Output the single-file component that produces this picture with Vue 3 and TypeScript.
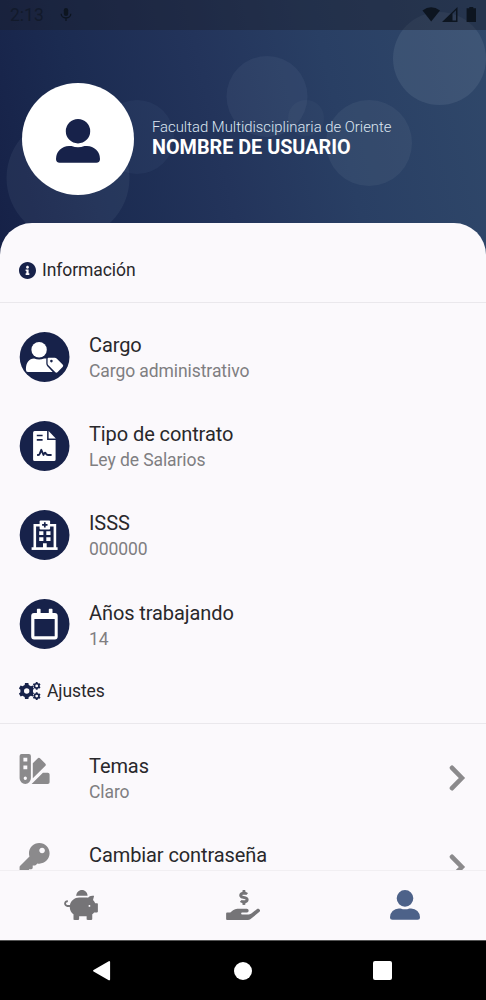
<script setup lang="ts">
interface InfoItem {
  icon: 'role' | 'contract' | 'hospital' | 'calendar'
  title: string
  value: string
}

const info: InfoItem[] = [
  { icon: 'role', title: 'Cargo', value: 'Cargo administrativo' },
  { icon: 'contract', title: 'Tipo de contrato', value: 'Ley de Salarios' },
  { icon: 'hospital', title: 'ISSS', value: '000000' },
  { icon: 'calendar', title: 'Años trabajando', value: '14' },
]

// Outline of a cog wheel with a round hole in its middle
function gear(cx: number, cy: number, r: number, teeth: number, hole: number): string {
  const step = (Math.PI * 2) / teeth
  const inner = r * 0.78
  const points: string[] = []
  for (let i = 0; i < teeth; i++) {
    const a = i * step - Math.PI / 2
    const corners: [number, number][] = [[-0.31, inner], [-0.2, r], [0.2, r], [0.31, inner]]
    for (const [offset, radius] of corners) {
      const t = a + offset * step
      points.push(`${(cx + radius * Math.cos(t)).toFixed(2)} ${(cy + radius * Math.sin(t)).toFixed(2)}`)
    }
  }
  return `M${points.join('L')}ZM${cx - hole} ${cy}a${hole} ${hole} 0 1 0 ${hole * 2} 0a${hole} ${hole} 0 1 0 ${-hole * 2} 0Z`
}

const gears = gear(7.7, 9, 8.2, 6, 2.7) + gear(17.7, 3.9, 4, 6, 1.4) + gear(17.7, 14.1, 4, 6, 1.4)
const person =
  'M22 0a12.2 12.2 0 1 1 0 24.4A12.2 12.2 0 0 1 22 0ZM13 27h2.5q6.5 2.5 13 0H31a13 13 0 0 1 13 13a3.7 3.7 0 0 1-3.7 3.7H3.7A3.7 3.7 0 0 1 0 40A13 13 0 0 1 13 27Z'
</script>

<template>
  <div class="screen">
    <header class="hero">
      <svg class="bubbles" width="486" height="260" viewBox="0 0 486 260">
        <circle cx="439.500" cy="58.500" r="46.500" fill="#94a9bd" opacity=".15" />
        <circle cx="267" cy="96.500" r="40.500" fill="#8192b0" opacity=".1" />
        <circle cx="306" cy="118" r="18" fill="#8192b0" opacity=".06" />
        <circle cx="369" cy="143" r="43" fill="#8a9daa" opacity=".11" />
        <circle cx="137" cy="137" r="37" fill="#7591ad" opacity=".08" />
        <circle cx="68" cy="178" r="61.500" fill="#8491ad" opacity=".11" />
      </svg>
      <div class="status">
        <span class="clock">2:13</span>
        <svg class="mic" width="12" height="14" viewBox="0 0 12 14">
          <rect x="3.800" y="0" width="4.400" height="8" rx="2.200" fill="currentColor" />
          <path d="M1.200 5.800a4.800 4.200 0 0 0 9.600 0M6 10v3" fill="none" stroke="currentColor" stroke-width="1.300" />
        </svg>
        <svg class="signals" width="56" height="18" viewBox="0 0 56 18">
          <path d="M1.500 4.500Q10 -1.800 19 4.500L10.200 15.500Z" fill="currentColor" />
          <path fill-rule="evenodd" d="M21 16 36.500 1V16ZM31.500 7.500V14.500H35V4.200Z" fill="currentColor" />
          <path d="M48.300 1h4v1.200h2.700V16h-9.400V2.200h2.700Z" fill="currentColor" />
        </svg>
      </div>
      <div class="profile">
        <div class="avatar">
          <svg width="44" height="44" viewBox="0 0 44 44"><path :d="person" fill="#17224a" /></svg>
        </div>
        <div class="identity">
          <div class="faculty">Facultad Multidisciplinaria de Oriente</div>
          <div class="name">NOMBRE DE USUARIO</div>
        </div>
      </div>
    </header>

    <main class="sheet">
      <h2 class="section first">
        <svg width="17" height="17" viewBox="8 8 496 496">
          <path fill="#17224a" d="M256 8C119.043 8 8 119.083 8 256c0 136.997 111.043 248 248 248s248-111.003 248-248C504 119.083 392.957 8 256 8zm0 110c23.196 0 42 18.804 42 42s-18.804 42-42 42-42-18.804-42-42 18.804-42 42-42zm56 254c0 6.627-5.373 12-12 12h-88c-6.627 0-12-5.373-12-12v-24c0-6.627 5.373-12 12-12h12v-64h-12c-6.627 0-12-5.373-12-12v-24c0-6.627 5.373-12 12-12h64c6.627 0 12 5.373 12 12v100h12c6.627 0 12 5.373 12 12v24z" />
        </svg>
        <span>Información</span>
      </h2>

      <div class="rows">
        <div v-for="item in info" :key="item.icon" class="row">
          <svg class="badge" width="51" height="50" viewBox="-0.600 0 51 50">
            <circle cx="25" cy="25" r="24.900" fill="#17224a" />
            <g v-if="item.icon === 'role'">
              <circle cx="19.500" cy="17.700" r="7.700" fill="#fff" />
              <path d="M6.300 37.500C6.300 30.500 9.500 26.500 14.500 26.500q5 2 10 0h3.300v7.500l5.400 6H8.300q-2 0-2-2.500Z" fill="#fff" />
              <path d="M29 25.700h6.200q1 0 1.800.8l6 6q1.300 1.300 0 2.600l-4.900 4.900q-1.300 1.300-2.600 0l-6.700-6.700q-.8-.8-.8-1.800v-4.800q0-1 1-1Z" fill="#fff" stroke="#17224a" stroke-width="2.600" paint-order="stroke" />
              <circle cx="31.800" cy="29.100" r="1.300" fill="#17224a" />
            </g>
            <g v-else-if="item.icon === 'contract'">
              <path d="M15 10h12.500v9H36v19.500q0 1.500-1.500 1.500H15q-1.500 0-1.500-1.500v-27Q13.500 10 15 10Z" fill="#fff" />
              <path d="M29 10 36.200 17.500H29Z" fill="#fff" />
              <path d="M17.200 14.500H23M17.200 18.800H23" stroke="#17224a" stroke-width="1.700" />
              <path d="M17.500 34h1.200q1 0 1.400-1.200l1.600-4 2.200 5.200q1.200-3.600 2.500-1.200.7 1.200 2 1.200H32" fill="none" stroke="#17224a" stroke-width="1.900" stroke-linejoin="round" />
            </g>
            <g v-else-if="item.icon === 'hospital'">
              <path d="M12 38.600H38" stroke="#fff" stroke-width="2.700" />
              <path d="M15.200 38V15.300H35.300V38" fill="none" stroke="#fff" stroke-width="2.600" />
              <rect x="20" y="10.400" width="10.500" height="9" rx="1" fill="#fff" />
              <path d="M25.200 12.200v5.400M22.500 14.900h5.400" stroke="#17224a" stroke-width="1.700" />
              <path d="M19.600 21.300h4.200v3.700h-4.200zM26.700 21.300h4.200v3.700h-4.200zM19.600 27.200h4.200v3.700h-4.200zM26.700 27.200h4.200v3.700h-4.200zM23.400 33.200h3.700v5h-3.700z" fill="#fff" />
            </g>
            <g v-else>
              <path fill-rule="evenodd" d="M17.300 10.500q0-.7.700-.7h2.300q.7 0 .7.700v3.600h8.200v-3.600q0-.7.700-.7h2.300q.7 0 .7.700v3.600h2.300q2.900 0 2.900 2.900v20.500q0 2.900-2.900 2.900H14.500q-2.900 0-2.900-2.900V17q0-2.900 2.900-2.900h2.800ZM14.800 20v17.300h20.300V20Z" fill="#fff" />
            </g>
          </svg>
          <div class="copy">
            <div class="title">{{ item.title }}</div>
            <div class="value">{{ item.value }}</div>
          </div>
        </div>
      </div>

      <h2 class="section second">
        <svg width="22" height="18" viewBox="0 0 22 18"><path :d="gears" fill="#17224a" fill-rule="evenodd" /></svg>
        <span>Ajustes</span>
      </h2>

      <div class="rows">
        <div class="row">
          <svg class="plain" width="31" height="30" viewBox="-0.600 0 31 30" fill="#8b8a8c">
            <path fill-rule="evenodd" d="M2 0h7.300q2 0 2 2v22.300a5.650 5.650 0 0 1-11.300 0V2q0-2 2-2ZM3.800 3.800v3.800h3.900V3.800ZM3.800 11.400v3.800h3.900v-3.800ZM5.700 22.600a1.650 1.650 0 1 0 0 3.300a1.650 1.650 0 0 0 0-3.300Z" />
            <path d="M13.200 9.200 18 4.400q1.300-1.300 2.600 0l5 5q1.300 1.300 0 2.600L13.200 24.300Z" />
            <path d="m12 30 11.300-11.200h4.900q1.800 0 1.800 1.800v7.600q0 1.800-1.800 1.800Z" />
          </svg>
          <div class="copy">
            <div class="title">Temas</div>
            <div class="value">Claro</div>
          </div>
          <svg class="chevron" width="17" height="27" viewBox="0 0 17 27"><path d="m3 2.800 9.900 10.200L3 23.200" /></svg>
        </div>
        <div class="row">
          <svg class="plain" width="31" height="30" viewBox="-10 0 529 512">
            <path fill="#8b8a8c" d="M512 176.001C512 273.203 433.202 352 336 352c-11.22 0-22.19-1.062-32.827-3.069l-24.012 27.014A23.999 23.999 0 0 1 261.223 384H224v40c0 13.255-10.745 24-24 24h-40v40c0 13.255-10.745 24-24 24H24c-13.255 0-24-10.745-24-24v-78.059c0-6.365 2.529-12.47 7.029-16.971l161.802-161.802C163.108 213.814 160 195.271 160 176 160 78.798 238.797.001 335.999 0 433.488-.001 512 78.511 512 176.001zM336 128c0 26.51 21.49 48 48 48s48-21.49 48-48-21.49-48-48-48-48 21.49-48 48z" />
          </svg>
          <div class="copy">
            <div class="title">Cambiar contraseña</div>
          </div>
          <svg class="chevron" width="17" height="27" viewBox="0 0 17 27"><path d="m3 2.800 9.900 10.200L3 23.200" /></svg>
        </div>
      </div>
    </main>

    <nav class="tabs">
      <svg width="34" height="30" viewBox="0 0 576 512">
        <path fill="#757477" d="M560 224h-29.500c-8.800-20-21.600-37.700-37.400-52.500L512 96h-32c-29.400 0-55.400 13.500-73 34.300-7.600-1.100-15.100-2.300-23-2.300H256c-77.400 0-141.900 55-156.800 128H56c-14.800 0-26.500-13.500-23.500-28.800C34.700 215.800 45.400 208 57 208h1c3.300 0 6-2.700 6-6v-20c0-3.300-2.700-6-6-6-28.500 0-53.900 20.400-57.500 48.600C-3.900 258.800 22.700 288 56 288h40c0 52.200 25.400 98.100 64 127.300V496c0 8.800 7.200 16 16 16h64c8.800 0 16-7.200 16-16v-48h128v48c0 8.800 7.200 16 16 16h64c8.800 0 16-7.200 16-16v-80.700c11.800-8.900 22.300-19.400 31.300-31.300H560c8.800 0 16-7.200 16-16V240c0-8.800-7.200-16-16-16zm-128 64c-8.800 0-16-7.200-16-16s7.200-16 16-16 16 7.200 16 16-7.200 16-16 16zM256 96h128c5.400 0 10.700.4 15.900.8 0-.3.1-.5.1-.8 0-53-43-96-96-96s-96 43-96 96c0 2.100.5 4.100.6 6.200 15.200-3.900 31-6.200 47.400-6.200z" />
      </svg>
      <svg width="34" height="30" viewBox="0 0 576 512">
        <path fill="#757477" d="M271.060,144.300l54.270,14.300a8.590,8.590,0,0,1,6.630,8.100c0,4.600-4.090,8.400-9.120,8.400h-35.600a30,30,0,0,1-11.190-2.200c-5.240-2.200-11.280-1.700-15.300,2l-19,17.500a11.680,11.680,0,0,0-2.250,2.660,11.420,11.420,0,0,0,3.880,15.740,83.770,83.770,0,0,0,34.510,11.500V240c0,8.800,7.830,16,17.370,16h17.370c9.550,0,17.380-7.200,17.380-16V222.400c32.930-3.600,57.840-31,53.500-63-3.150-23-22.460-41.300-46.560-47.700L282.680,97.400a8.590,8.590,0,0,1-6.630-8.100c0-4.600,4.090-8.400,9.120-8.400h35.600A30,30,0,0,1,332,83.100c5.230,2.200,11.280,1.700,15.300-2l19-17.500A11.310,11.310,0,0,0,368.470,61a11.430,11.430,0,0,0-3.840-15.780,83.820,83.820,0,0,0-34.520-11.500V16c0-8.800-7.820-16-17.370-16H295.370C285.820,0,278,7.200,278,16V33.600c-32.890,3.600-57.850,31-53.510,63C227.630,119.600,247,137.900,271.060,144.300ZM565.270,328.100c-11.800-10.700-30.200-10-42.600,0L430.270,402a63.640,63.640,0,0,1-40,14H272a16,16,0,0,1,0-32h78.290c15.900,0,30.710-10.900,33.250-26.600a31.200,31.200,0,0,0,.46-5.460A32,32,0,0,0,352,320H192a117.660,117.660,0,0,0-74.100,26.290L71.400,384H16A16,16,0,0,0,0,400v96a16,16,0,0,0,16,16H372.770a64,64,0,0,0,40-14L564,377a32,32,0,0,0,1.280-48.900Z" />
      </svg>
      <svg width="30" height="30" viewBox="0 0 44 44"><path :d="person" fill="#4d6289" /></svg>
    </nav>

    <footer class="system">
      <svg width="20" height="22" viewBox="0 0 20 22"><path d="M17.200 2v17.400L2 10.700Z" fill="#fff" stroke="#fff" stroke-width="1.800" stroke-linejoin="round" /></svg>
      <span class="home"></span>
      <span class="recent"></span>
    </footer>
  </div>
</template>

<style>
body {
  margin: 0;
}
</style>

<style scoped>
.screen {
  width: 486px;
  height: 1000px;
  display: flex;
  flex-direction: column;
  overflow: hidden;
  background: #fbf9fc;
  font-family: Roboto, "Liberation Sans", sans-serif;
  color: #29282b;
}

.screen svg {
  display: block;
  flex: none;
}

.hero {
  position: relative;
  flex: none;
  height: 260px;
  background: linear-gradient(77deg, #162147 0%, #1b2b51 20%, #23345b 45%, #293f64 68%, #30486a 100%);
}

.bubbles {
  position: absolute;
  inset: 0;
}

.status {
  position: relative;
  height: 30px;
  box-sizing: border-box;
  padding: 0 9px 0 10px;
  display: flex;
  align-items: center;
  background: rgba(26, 28, 40, 0.42);
  color: #0d1520;
}

.clock {
  font-size: 17.500px;
  line-height: 30px;
  color: #121a2b;
}

.mic {
  margin-left: 16px;
}

.signals {
  margin-left: auto;
}

.profile {
  position: relative;
  display: flex;
  align-items: center;
  gap: 18px;
  padding: 53px 0 0 22px;
}

.avatar {
  width: 112px;
  height: 112px;
  border-radius: 50%;
  background: #fff;
  display: flex;
  align-items: center;
  justify-content: center;
  padding-top: 3px;
  box-sizing: border-box;
}

.identity {
  color: #fff;
  white-space: nowrap;
  padding-bottom: 2px;
}

.faculty {
  font-size: 14.850px;
  font-weight: 300;
  line-height: 18px;
  color: #dce6f2;
}

.name {
  font-size: 19.800px;
  font-weight: 700;
  line-height: 23px;
}

.sheet {
  position: relative;
  flex: none;
  height: 647px;
  margin-top: -37px;
  overflow: hidden;
  border-radius: 32px 32px 0 0;
  background: #fbf9fc;
}

.section {
  margin: 0;
  display: flex;
  align-items: center;
  box-sizing: border-box;
  border-bottom: 1px solid #eae8ec;
  padding-left: 19px;
  gap: 6px;
  font-size: 17.500px;
  letter-spacing: -0.080px;
  font-weight: 400;
}

.first {
  height: 80px;
  padding-top: 15px;
}

.second {
  height: 64px;
}

.rows {
  padding-top: 9px;
}

.row {
  height: 89.200px;
  display: flex;
  align-items: flex-start;
  padding: 0 20px 0 19px;
}

.rows + .section {
  margin-top: -9px;
}

.badge {
  margin: 19.800px 19px 0 0;
}

.plain {
  margin: 21.500px 39px 0 0;
}

.copy {
  padding-top: 20px;
}

.title {
  font-size: 20px;
  letter-spacing: -0.090px;
  line-height: 26px;
}

.value {
  font-size: 17.500px;
  letter-spacing: -0.080px;
  line-height: 26px;
  color: #7f7e81;
}

.chevron {
  margin: 32px 0 0 auto;
}

.chevron path {
  fill: none;
  stroke: #8b8a8c;
  stroke-width: 4.600;
  stroke-linecap: round;
}

.tabs {
  flex: none;
  position: relative;
  height: 70px;
  box-sizing: border-box;
  border-top: 1px solid #f1eff2;
  padding-bottom: 2px;
  display: grid;
  grid-template-columns: repeat(3, 162px);
  place-items: center;
  background: #fbf9fc;
}

.system {
  flex: none;
  height: 60px;
  box-sizing: border-box;
  border-top: 1px solid #555;
  padding: 0 94px 0 92px;
  display: flex;
  align-items: center;
  justify-content: space-between;
  background: #000;
}

.home {
  width: 18px;
  height: 18px;
  border-radius: 50%;
  background: #fff;
}

.recent {
  width: 19px;
  height: 19px;
  border-radius: 2px;
  background: #fff;
}
</style>
